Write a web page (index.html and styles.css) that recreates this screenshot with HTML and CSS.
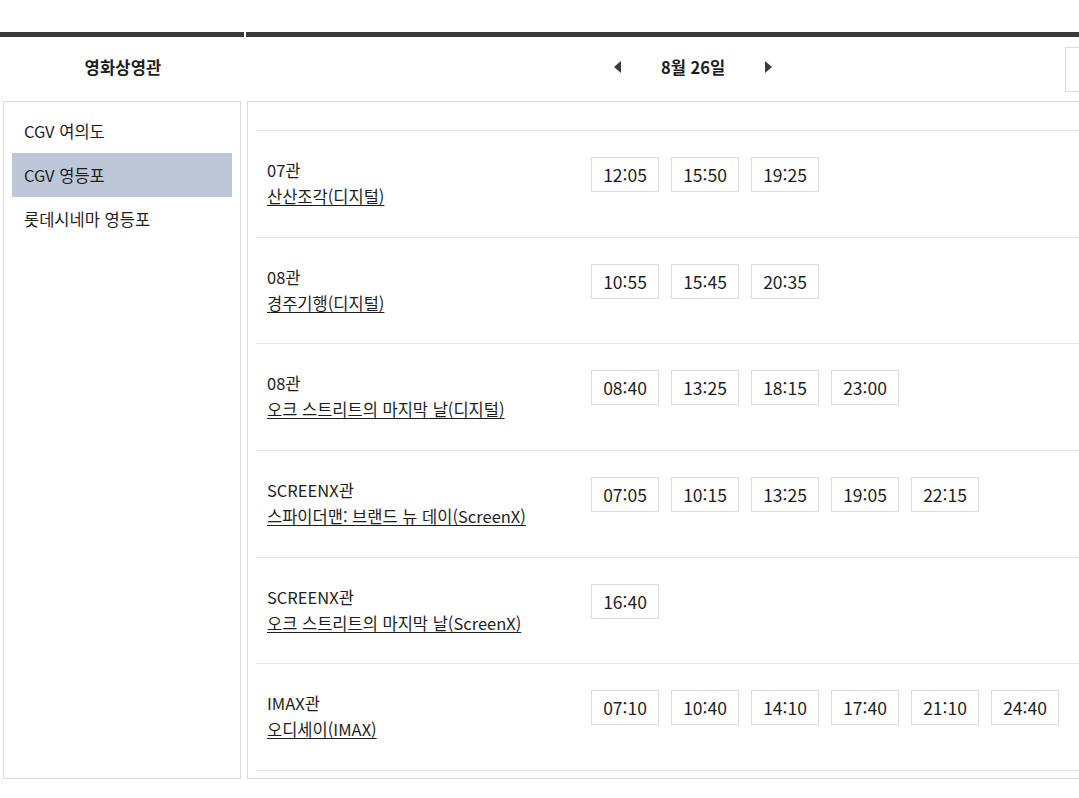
FILE: index.html
```html
<!DOCTYPE html>
<html lang="ko">
<head>
<meta charset="utf-8">
<title>영화상영관</title>
<link rel="stylesheet" href="styles.css">
</head>
<body>
<div class="page">
  <div class="head-left">영화상영관</div>
  <div class="head-right">
    <div class="spacer"></div>
    <div class="date-nav">
      <button class="arrow" aria-label="이전 날짜"><svg width="7" height="12" viewBox="0 0 7 12"><polygon points="7,0 7,12 0,6" fill="#3a3a3a"/></svg></button>
      <span class="date">8월 26일</span>
      <button class="arrow" aria-label="다음 날짜"><svg width="7" height="12" viewBox="0 0 7 12"><polygon points="0,0 0,12 7,6" fill="#3a3a3a"/></svg></button>
    </div>
    <div class="select-cell"><div class="select-box"></div></div>
  </div>

  <div class="col-left">
    <ul class="theater-list">
      <li class="theater">CGV 여의도</li>
      <li class="theater selected">CGV 영등포</li>
      <li class="theater">롯데시네마 영등포</li>
    </ul>
  </div>

  <div class="col-right">
    <div class="schedule">
      <div class="schedule-top"></div>
      <div class="row">
        <div class="info"><div class="hall">07관</div><a class="title" href="#">산산조각(디지털)</a></div>
        <div class="times"><span class="time">12:05</span><span class="time">15:50</span><span class="time">19:25</span></div>
      </div>
      <div class="row">
        <div class="info"><div class="hall">08관</div><a class="title" href="#">경주기행(디지털)</a></div>
        <div class="times"><span class="time">10:55</span><span class="time">15:45</span><span class="time">20:35</span></div>
      </div>
      <div class="row">
        <div class="info"><div class="hall">08관</div><a class="title" href="#">오크 스트리트의 마지막 날(디지털)</a></div>
        <div class="times"><span class="time">08:40</span><span class="time">13:25</span><span class="time">18:15</span><span class="time">23:00</span></div>
      </div>
      <div class="row">
        <div class="info"><div class="hall">SCREENX관</div><a class="title" href="#">스파이더맨: 브랜드 뉴 데이(ScreenX)</a></div>
        <div class="times"><span class="time">07:05</span><span class="time">10:15</span><span class="time">13:25</span><span class="time">19:05</span><span class="time">22:15</span></div>
      </div>
      <div class="row">
        <div class="info"><div class="hall">SCREENX관</div><a class="title" href="#">오크 스트리트의 마지막 날(ScreenX)</a></div>
        <div class="times"><span class="time">16:40</span></div>
      </div>
      <div class="row">
        <div class="info"><div class="hall">IMAX관</div><a class="title" href="#">오디세이(IMAX)</a></div>
        <div class="times"><span class="time">07:10</span><span class="time">10:40</span><span class="time">14:10</span><span class="time">17:40</span><span class="time">21:10</span><span class="time">24:40</span></div>
      </div>
    </div>
  </div>
</div>
</body>
</html>
```

FILE: styles.css
```css
html, body {
  margin: 0;
  padding: 0;
  overflow: hidden;
  background: #fff;
}
body {
  font-family: "Noto Sans CJK KR", "Noto Sans", sans-serif;
  color: #1e1e1e;
  font-size: 16.5px;
}
.page {
  width: 1140px;
  padding-top: 32px;
  display: grid;
  grid-template-columns: 244px 894px;
  column-gap: 2px;
}
.head-left,
.head-right {
  border-top: 5px solid #3a3a3a;
  height: 69px;
  box-sizing: border-box;
}
.head-left {
  display: flex;
  align-items: center;
  justify-content: center;
  padding-bottom: 4px;
  font-weight: 700;
  font-size: 16.5px;
  letter-spacing: 0.2px;
  padding-left: 2px;
}
.head-right {
  display: grid;
  grid-template-columns: 1fr auto 1fr;
  align-items: center;
}
.date-nav {
  display: flex;
  align-items: center;
  gap: 40px;
  padding-bottom: 4px;
}
.arrow {
  border: 0;
  background: none;
  padding: 0;
  display: flex;
  cursor: pointer;
}
.date {
  font-weight: 700;
  font-size: 16.5px;
}
.select-cell {
  display: flex;
  justify-content: flex-end;
}
.select-box {
  width: 72px;
  height: 45px;
  border: 1px solid #dcdcdc;
  box-sizing: border-box;
  margin-right: 3px;
  margin-top: 1px;
}
.col-left {
  padding-left: 3px;
  padding-right: 3px;
}
.theater-list {
  list-style: none;
  margin: 0;
  padding: 7px 8px;
  height: 678px;
  box-sizing: border-box;
  border: 1px solid #dcdcdc;
}
.theater {
  height: 44px;
  display: flex;
  align-items: center;
  padding-left: 12px;
  font-size: 16.5px;
}
.theater.selected {
  background: #bec7d7;
}
.col-right {
  padding-left: 1px;
}
.schedule {
  height: 678px;
  box-sizing: border-box;
  border: 1px solid #dcdcdc;
  padding: 0 0 0 8px;
}
.schedule-top {
  height: 28px;
  border-bottom: 1px solid #e8e8e8;
}
.row {
  display: flex;
  align-items: flex-start;
  height: 106.67px;
  box-sizing: border-box;
  padding: 26px 0 0 11px;
  border-bottom: 1px solid #e8e8e8;
}
.info {
  width: 324px;
  flex: none;
  line-height: 26px;
  font-size: 16.5px;
}
.hall {
  display: block;
}
.title {
  color: #1e1e1e;
  text-decoration: underline;
  text-underline-offset: 2px;
}
.times {
  display: flex;
  gap: 12px;
}
.time {
  width: 68px;
  height: 35px;
  box-sizing: border-box;
  border: 1px solid #dcdcdc;
  display: flex;
  align-items: center;
  justify-content: center;
  font-size: 17.5px;
}
```
